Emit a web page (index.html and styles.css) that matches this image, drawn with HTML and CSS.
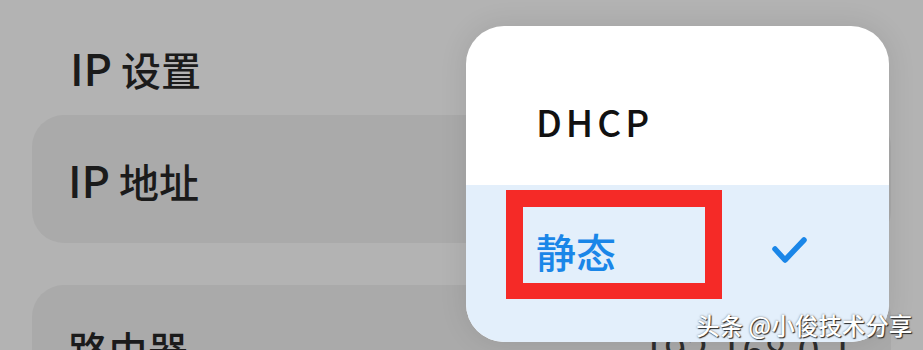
FILE: index.html
```html
<!DOCTYPE html>
<html lang="zh-CN">
<head>
<meta charset="utf-8">
<title>IP 设置</title>
<link rel="stylesheet" href="styles.css">
</head>
<body>
<div class="page">
  <div class="section-title"><span class="lat">IP</span> 设置</div>
  <div class="card">
    <span class="label"><span class="lat">IP</span> 地址</span>
    <span class="value">192.168.0.100</span>
  </div>
  <div class="card">
    <span class="label">路由器</span>
    <span class="value">192.168.0.1</span>
  </div>
</div>

<div class="popup">
  <div class="option">DHCP</div>
  <div class="option selected">
    <span class="option-text">静态</span>
    <svg class="check" width="36" height="30" viewBox="0 0 36 30" aria-hidden="true">
      <polyline points="3,13 13,24 32,4" fill="none" stroke="#1a86e8" stroke-width="5.5" stroke-linecap="round" stroke-linejoin="round"/>
    </svg>
  </div>
</div>

<div class="highlight"></div>

<div class="watermark">头条 @小俊技术分享</div>
</body>
</html>
```

FILE: styles.css
```css
html, body {
  margin: 0;
  padding: 0;
}

body {
  width: 923px;
  height: 350px;
  overflow: hidden;
  background: #b3b3b3;
  font-family: "Noto Sans CJK SC", "Noto Sans", sans-serif;
  color: #1b1b1b;
  position: relative;
}

.page {
  padding: 43px 32px 0 32px;
}

.section-title {
  font-size: 40px;
  line-height: 48px;
  font-weight: 500;
  padding-left: 38px;
  margin-bottom: 22px;
}

.lat {
  font-size: 44px;
}

.card {
  height: 128px;
  border-radius: 32px;
  background: #aaaaaa;
  display: flex;
  align-items: center;
  justify-content: space-between;
  padding: 0 38px 0 36px;
  margin-bottom: 42px;
  font-size: 40px;
  font-weight: 500;
}

.value {
  color: #2e2e2e;
  font-weight: 400;
}

.popup {
  position: absolute;
  left: 466px;
  top: 26px;
  width: 423px;
  height: 316px;
  border-radius: 38px;
  background: #ffffff;
  overflow: hidden;
  display: flex;
  flex-direction: column;
  box-shadow: 0 0 28px rgba(0, 0, 0, 0.10);
}

.option {
  box-sizing: border-box;
  height: 159px;
  display: flex;
  align-items: center;
  padding-left: 70px;
  padding-top: 30px;
  font-size: 37px;
  font-weight: 500;
  letter-spacing: 4px;
  color: #111111;
}

.option.selected {
  flex: 1;
  height: auto;
  padding-top: 0;
  padding-bottom: 25px;
  background: #e3effb;
  color: #1a86e8;
  font-size: 40px;
  letter-spacing: 0;
}

.check {
  margin-left: 156px;
}

.highlight {
  position: absolute;
  left: 506px;
  top: 190px;
  width: 182px;
  height: 76px;
  border: 17px solid #f52a27;
  border-bottom-width: 16px;
}

.watermark {
  position: absolute;
  left: 696px;
  top: 310px;
  font-size: 23.5px;
  line-height: 30px;
  font-weight: 500;
  color: #ffffff;
  text-shadow: 1px 1px 1px #2a2a2a, 0 0 2px rgba(0, 0, 0, 0.5);
  white-space: nowrap;
}
```
